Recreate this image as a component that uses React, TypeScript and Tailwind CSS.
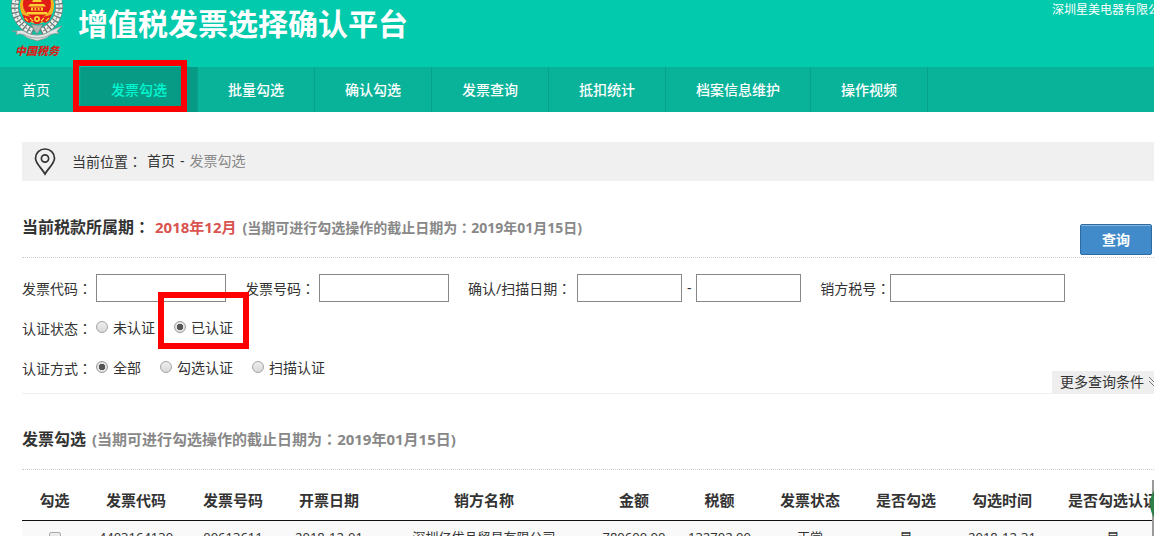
import { useState } from 'react';
import type { ReactNode } from 'react';

const navItems = ['首页', '发票勾选', '批量勾选', '确认勾选', '发票查询', '抵扣统计', '档案信息维护', '操作视频'];

const columns = [
  { title: '勾选', width: 'w-[65px]' },
  { title: '发票代码', width: 'w-[98px]' },
  { title: '发票号码', width: 'w-24' },
  { title: '开票日期', width: 'w-24' },
  { title: '销方名称', width: 'w-[214px]' },
  { title: '金额', width: 'w-[86px]' },
  { title: '税额', width: 'w-[85px]' },
  { title: '发票状态', width: 'w-24' },
  { title: '是否勾选', width: 'w-24' },
  { title: '勾选时间', width: 'w-24' },
  { title: '是否勾选认证', width: 'w-[126px]' },
];

const rows = [
  ['4403164130', '00613611', '2018-12-01', '深圳亿优品贸易有限公司', '780600.00', '132702.00', '正常', '是', '2018-12-31', '是'],
];

// full-width colon centred in its box
function Colon() {
  return <span className="font-['Noto_Sans_CJK_TC',sans-serif]">：</span>;
}

function Logo() {
  return (
    <svg width="56" height="60" viewBox="8 0 56 60" aria-hidden="true" className="shrink-0">
      {/* wheat wreath */}
      <path d="M17 -4C11 12 18 25 33 32M57 -4C63 12 56 25 41 32" fill="none" stroke="#6f7b79" strokeWidth="7.5" />
      <path d="M17 -4C11 12 18 25 33 32M57 -4C63 12 56 25 41 32" fill="none" stroke="#eef0ee" strokeWidth="6.5" strokeDasharray="3 1.4" />
      <path d="M17 -4C11 12 18 25 33 32M57 -4C63 12 56 25 41 32" fill="none" stroke="#848e8c" strokeWidth="1.2" strokeDasharray="2 2.4" />
      {/* national emblem */}
      <ellipse cx="37" cy="5.5" rx="17" ry="18" fill="#f3b120" />
      <ellipse cx="37" cy="4" rx="14" ry="14" fill="#e01c16" />
      <path d="M33 0h8l1 2h-10zM30 4h14l2 2.5H28zM31 7.5h12v3H31zM27 12h20l1 2.5H26z" fill="#fbd034" />
      <path d="M33 8h1.5v2.5H33zM36.2 8h1.6v2.5h-1.6zM39.5 8H41v2.5h-1.5z" fill="#df1f17" />
      <path d="M22 14c3 2 8 3 11 2l4 2 4-2c3 1 8 0 11-2l-3 7-4 2-3-2-3 3h-4l-3-3-3 2-4-2z" fill="#e3201a" />
      <circle cx="37" cy="19" r="3" fill="#fbd034" />
      <circle cx="37" cy="19" r="1.2" fill="#df1f17" />
      <path d="M25 18l3 3M49 18l-3 3M30 18l3 3M44 18l-3 3" stroke="#fbd034" strokeWidth="1.2" />
      <path d="M31 24c2 4 4 8 6 10 2-2 4-6 6-10l-4 1h-4z" fill="#aeb7b4" stroke="#68736f" strokeWidth="0.6" />
      {/* ribbon */}
      <path d="M12 31c5 1 8-2 12 0 4 3 9 4 13 4s9-1 13-4c4-2 7-3 12-5l-5 5 2 3c-5-1-7 0-10 2-3 3-7 3-12 5-5-2-9-2-12-5-3-2-5-3-9-1l1-3z" fill="#e2e5e3" stroke="#87918e" strokeWidth="0.8" />
      <path d="M23 34c5 3 9 4 14 4s9-1 14-4" fill="none" stroke="#a1aaa7" strokeWidth="1" />
      <text x="37" y="55" textAnchor="middle" fontSize="11" fontWeight="900" fontStyle="italic" fill="#d8221b" className="font-['Noto_Sans_CJK_SC',serif]">中国税务</text>
    </svg>
  );
}

function PinIcon() {
  return (
    <svg width="22" height="28" viewBox="0 0 22 28" fill="none" stroke="#333" strokeWidth="1.7" aria-hidden="true">
      <path d="M11 26C8 20.5 1.5 15.5 1.5 10.2A9.5 9.2 0 0 1 20.5 10.2C20.5 15.5 14 20.5 11 26Z" />
      <circle cx="11" cy="10.5" r="3.6" />
    </svg>
  );
}

function Field({ id, label, gap = 'mr-1', children }: { id: string; label: string; gap?: string; children: ReactNode }) {
  return (
    <div className="flex items-center">
      <label htmlFor={id} className={gap}>{label}<Colon /></label>
      {children}
    </div>
  );
}

const inputClass = 'h-7 border border-[#888] bg-white px-1 outline-none';

function Radio({ name, label, checked, onChange }: { name: string; label: string; checked: boolean; onChange: () => void }) {
  return (
    <label className="flex items-center">
      <input
        type="radio"
        name={name}
        checked={checked}
        onChange={onChange}
        className="mr-[5px] mb-[3px] size-3 appearance-none rounded-full border border-[#a5a5a5] bg-linear-to-b from-[#eee] to-[#d8d8d8] checked:border-[#999] checked:bg-[radial-gradient(circle,#555_0_3px,#e4e4e4_3px)]"
      />
      {label}
    </label>
  );
}

export default function App() {
  const [status, setStatus] = useState('已认证');
  const [method, setMethod] = useState('全部');

  return (
    <div className="h-screen overflow-hidden bg-white font-['Noto_Sans','Noto_Sans_CJK_SC',sans-serif] text-sm text-[#333]">
      {/* Header */}
      <header className="flex h-[67px] items-start bg-[#02caac] pl-2 text-white">
        <Logo />
        <h1 className="ml-3.5 text-3xl leading-[48px] font-bold whitespace-nowrap">增值税发票选择确认平台</h1>
        <span className="ml-auto w-[102px] shrink-0 overflow-hidden text-xs leading-5 whitespace-nowrap">深圳星美电器有限公司</span>
      </header>

      {/* Navigation */}
      <nav className="flex h-[45px] bg-[#09b39a] text-white">
        {navItems.map((item, i) => (
          <a
            key={item}
            href="#"
            className={`relative flex items-center border-r border-[#07a28b] pr-[30px] whitespace-nowrap ${i === 0 ? 'pl-[22px]' : 'pl-[30px] font-medium'} ${i === 1 ? 'bg-[#079b85] text-[#02f6d1]' : ''}`}
          >
            {item}
            {i === 1 && <span className="absolute -top-[7px] right-2.5 bottom-0 -left-2 border-6 border-[#fe0000]" />}
          </a>
        ))}
      </nav>

      <main className="pt-[30px] pl-[22px]">
        {/* Breadcrumb */}
        <div className="flex h-[39px] items-center bg-[#f0f0f0] pl-3">
          <PinIcon />
          <div className="ml-4 flex gap-[5px]">
            <span>当前位置<Colon /></span>
            <a href="#">首页</a>
            <span>-</span>
            <span className="text-[#888]">发票勾选</span>
          </div>
        </div>

        <div className="flex items-start justify-between border-b border-dotted border-[#ccc] pt-[33px] pr-0.5 pb-0.5">
          <h2 className="flex items-baseline text-base leading-6 font-bold">
            <span>当前税款所属期<Colon /></span>
            <span className="ml-[5px] text-[15px] text-[#d9534f]">2018年12月</span>
            <span className="ml-1.5 text-sm text-[#888]">(当期可进行勾选操作的截止日期为<Colon />2019年01月15日)</span>
          </h2>
          <button className="mt-2.5 h-[31px] w-[72px] rounded-xs border border-[#2d6ca2] bg-[#428bca] font-bold text-white shadow-[inset_0_1px_0_#86b5dd]">查询</button>
        </div>

        {/* Search form */}
        <form className="border-b border-[#eee] pt-4 whitespace-nowrap">
          <div className="flex gap-[19px]">
            <Field id="code" label="发票代码">
              <input id="code" type="text" className={`w-[130px] ${inputClass}`} />
            </Field>
            <Field id="number" label="发票号码">
              <input id="number" type="text" className={`w-[130px] ${inputClass}`} />
            </Field>
            <Field id="date-from" label="确认/扫描日期" gap="mr-1.5">
              <input id="date-from" type="text" className={`w-[105px] ${inputClass}`} />
              <span className="w-3.5 text-center">-</span>
              <input type="text" aria-label="扫描日期" className={`w-[105px] ${inputClass}`} />
            </Field>
            <Field id="tax-no" label="销方税号" gap="mr-0">
              <input id="tax-no" type="text" className={`w-[175px] ${inputClass}`} />
            </Field>
          </div>

          <div className="mt-3 flex h-7 items-center">
            <span className="mr-1">认证状态<Colon /></span>
            <Radio name="status" label="未认证" checked={status === '未认证'} onChange={() => setStatus('未认证')} />
            <div className="relative ml-[19px]">
              <Radio name="status" label="已认证" checked={status === '已认证'} onChange={() => setStatus('已认证')} />
              <span className="pointer-events-none absolute -inset-x-4 -top-[26px] -bottom-[11px] border-6 border-[#fe0000]" />
            </div>
          </div>

          <div className="mt-3 flex h-[39px]">
            <div className="flex h-7 items-center gap-[19px]">
              <div className="flex items-center">
                <span className="mr-1">认证方式<Colon /></span>
                <Radio name="method" label="全部" checked={method === '全部'} onChange={() => setMethod('全部')} />
              </div>
              <Radio name="method" label="勾选认证" checked={method === '勾选认证'} onChange={() => setMethod('勾选认证')} />
              <Radio name="method" label="扫描认证" checked={method === '扫描认证'} onChange={() => setMethod('扫描认证')} />
            </div>
            <button type="button" className="ml-auto flex h-[22px] w-[102px] items-center self-end overflow-hidden bg-[#eee] pl-2">
              更多查询条件
              <svg width="12" height="12" viewBox="0 0 12 12" fill="none" stroke="#777" className="ml-1 shrink-0" aria-hidden="true">
                <path d="M1 1l5 5 5-5M1 5l5 5 5-5" />
              </svg>
            </button>
          </div>
        </form>

        {/* Invoice list */}
        <h2 className="flex items-baseline gap-1.5 border-b border-dotted border-[#ccc] pt-[33px] pb-[18px] text-base leading-6 font-bold">
          <span>发票勾选</span>
          <span className="text-[15px] text-[#888]">(当期可进行勾选操作的截止日期为<Colon />2019年01月15日)</span>
        </h2>
        <div className="overflow-hidden">
          <table className="w-[1154px] table-fixed text-center whitespace-nowrap">
            <thead>
              <tr className="border-b border-[#111] text-[15px] leading-5">
                {columns.map((col) => (
                  <th key={col.title} className={`pt-5 pb-2.5 font-bold ${col.width}`}>{col.title}</th>
                ))}
              </tr>
            </thead>
            <tbody>
              {rows.map((row) => (
                <tr key={row[1]} className="h-[34px] bg-[#f9f9f9] text-[13px]">
                  <td>
                    <input type="checkbox" aria-label="勾选" className="mx-auto block size-3 appearance-none rounded-xs border border-[#aaa] bg-linear-to-b from-[#eee] to-[#ddd]" />
                  </td>
                  {row.map((cell, i) => (
                    <td key={i}>{cell}</td>
                  ))}
                </tr>
              ))}
            </tbody>
          </table>
        </div>
      </main>

      {/* Floating side widget */}
      <div className="fixed right-0 bottom-0 h-14 w-1 overflow-hidden">
        <div className="ml-0.5 h-full bg-[#999]" />
        <span className="absolute top-0 left-0 size-12 rounded-full bg-[#2c8048]" />
      </div>
    </div>
  );
}
